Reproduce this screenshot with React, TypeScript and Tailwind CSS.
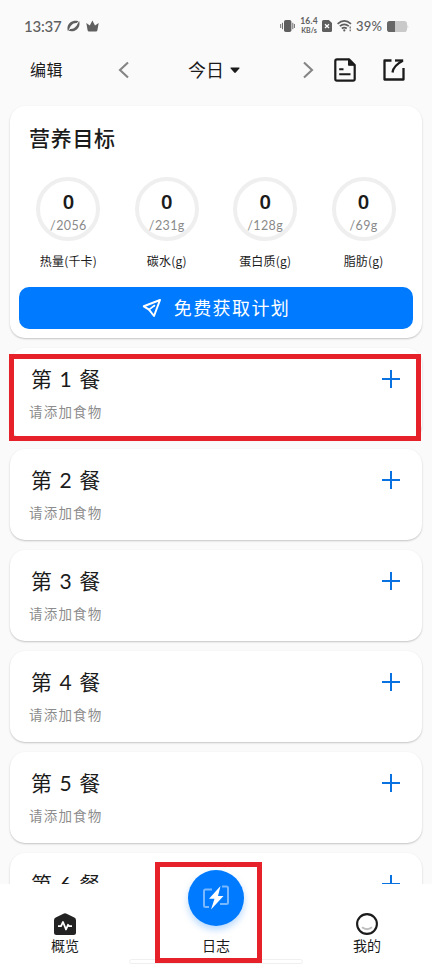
import React from 'react';

interface Goal {
    value: string;
    target: string;
    label: string;
}

const goals: Goal[] = [
    { value: "0", target: "/2056", label: "热量(千卡)" },
    { value: "0", target: "/231g", label: "碳水(g)" },
    { value: "0", target: "/128g", label: "蛋白质(g)" },
    { value: "0", target: "/69g", label: "脂肪(g)" },
];

const meals = [1, 2, 3, 4, 5, 6];

const StatusBar = () => (
    <div className="h-[50px] pt-[2px] pl-6 pr-[23px] flex items-center justify-between text-[#5f5f5f]">
        <div className="flex items-center">
            <span className="w-[43px] text-[15px] leading-5 tracking-[-0.2px] font-medium">13:37</span>
            <svg width="13" height="12" viewBox="0 0 13 12" fill="none">
                <path d="M1 11.2C0 8.5 0.4 4.8 3.2 2.6C5.6 0.6 9 0.4 11.4 1.2L9.8 3C7.6 2.8 6 3.6 4.4 5.2C2.8 6.8 2.4 8.8 1 11.2Z" fill="currentColor" />
                <path d="M12.1 0.9C13 3.5 12.6 7.2 9.8 9.4C7.4 11.4 4 11.6 1.6 10.8L3.2 9C5.4 9.2 7 8.4 8.6 6.8C10.2 5.2 10.6 3.2 12.1 0.9Z" fill="currentColor" />
            </svg>
            <svg width="13" height="12" viewBox="0 0 13 12" className="ml-[6px]" fill="currentColor">
                <path d="M0.3 3L3.8 5.4L6.4 0.5L9 5.4L12.7 3L11.4 10.2Q11.2 11.4 10 11.4H3Q1.8 11.4 1.6 10.2Z" />
            </svg>
        </div>
        <div className="flex items-center">
            <svg width="15" height="14" viewBox="0 0 15 14" fill="currentColor">
                <rect x="4" y="1" width="7.4" height="12" rx="1.8" />
                <path d="M0.7 5v4M2.5 3.8v6.4M12.8 3.8v6.4M14.4 5v4" stroke="currentColor" strokeWidth="0.9" />
            </svg>
            <div className="ml-[4px] -mt-px w-[20px] flex flex-col items-center leading-[9px] whitespace-nowrap font-bold">
                <span className="text-[8.5px] tracking-[0.2px]">16.4</span>
                <span className="text-[7px]">KB/s</span>
            </div>
            <svg width="10" height="12" viewBox="0 0 10 12" className="ml-[3px]">
                <path d="M1.5 0H6.8L10 3V10.5Q10 12 8.5 12H1.5Q0 12 0 10.5V1.5Q0 0 1.5 0Z" fill="currentColor" />
                <path d="M3 4.3L7 8M7 4.3L3 8" stroke="#fff" strokeWidth="1.3" />
            </svg>
            <svg width="15" height="12" viewBox="0 0 15 12" className="ml-[5px]" fill="none" stroke="currentColor" strokeWidth="1.7">
                <path d="M0.6 3.8Q7.3 -2 14 3.8" />
                <path d="M2.8 6.2Q7.3 2.4 11.8 6.2" />
                <path d="M4.8 8.5Q7.3 6.6 9.8 8.5" />
                <circle cx="7.3" cy="10.4" r="1.1" fill="currentColor" stroke="none" />
                <path d="M13.2 6.6v1.8M13.2 9.4v1.8" strokeWidth="1.2" />
            </svg>
            <span className="ml-[4px] w-[27px] text-[13px] leading-5 tracking-[0.2px] whitespace-nowrap font-medium">39%</span>
            <svg width="22" height="11" viewBox="0 0 22 11" className="ml-[4px]">
                <rect x="0" y="0" width="20" height="11" rx="2.8" fill="#c9c9c9" />
                <path d="M20.5 3.5Q22 5.5 20.5 7.5Z" fill="#c9c9c9" />
                <path d="M2.8 0H8V11H2.8Q0 11 0 8.2V2.8Q0 0 2.8 0Z" fill="#666" />
            </svg>
        </div>
    </div>
);

const Header = () => (
    <div className="h-[56px] pb-4 pl-[30px] pr-[27px] flex items-center text-[#1b1b1b]">
        <span className="w-[88px] text-[16px] leading-6 tracking-[0.6px]">编辑</span>
        <svg width="12" height="18" viewBox="0 0 12 18" fill="none" stroke="#858585" strokeWidth="2.1">
            <path d="M10 1.5L2 9L10 16.5" />
        </svg>
        <span className="ml-[58px] text-[18px] leading-6">今日</span>
        <svg width="10" height="7" viewBox="0 0 10 7" className="ml-[6px]" fill="#1b1b1b">
            <path d="M1 0.5H9Q10 0.5 9.3 1.5L5.8 5.6Q5 6.4 4.2 5.6L0.7 1.5Q0 0.5 1 0.5Z" />
        </svg>
        <svg width="12" height="18" viewBox="0 0 12 18" className="ml-[62px]" fill="none" stroke="#858585" strokeWidth="2.1">
            <path d="M2 1.5L10 9L2 16.5" />
        </svg>
        <svg width="22" height="24" viewBox="0 0 22 24" className="ml-[20px]" fill="none" stroke="#1b1b1b" strokeWidth="2.2">
            <path d="M3 1.3H15L20.7 7V21Q20.7 22.7 19 22.7H3Q1.3 22.7 1.3 21V3Q1.3 1.3 3 1.3Z" strokeLinejoin="round" />
            <path d="M14.5 1V7.3H21Z" fill="#1b1b1b" strokeWidth="1" />
            <path d="M5.2 11.3H9.5M5.2 16.3H16.5" strokeWidth="2" />
        </svg>
        <svg width="22" height="22" viewBox="0 0 22 22" className="ml-auto" fill="none" stroke="#1b1b1b" strokeWidth="2.3">
            <path d="M8.5 1.5H1.5V20.5H20.5V9" strokeLinejoin="round" />
            <path d="M12 1.5H20.2" />
            <path d="M9.5 13.5Q10.5 6.5 19.8 1.8" />
        </svg>
    </div>
);

const GoalRing = ({ value, target, label }: Goal) => (
    <div className="w-[98.4px] flex flex-col items-center">
        <div className="w-16 h-16 rounded-full border-4 border-[#efefef] flex flex-col items-center">
            <span className="mt-[9px] font-['Noto_Sans'] font-semibold text-[20px] leading-6 text-[#1b1b1b]">{value}</span>
            <span className="mt-[1px] text-[12.5px] leading-[22px] tracking-[0.4px] text-[#8a8a8a]">{target}</span>
        </div>
        <span className="mt-[11px] font-['Noto_Sans_CJK_SC',sans-serif] text-[12px] leading-[18px] tracking-[0.2px] text-[#1b1b1b]">{label}</span>
    </div>
);

const MealCard = ({ index }: { index: number }) => (
    <div className="h-[91px] shrink-0 rounded-[15px] bg-white shadow-[0_1px_2px_rgba(0,0,0,0.22)] pl-[19px] pr-[22px] pt-[16px] flex justify-between">
        <div>
            <h3 className="ml-[2px] text-[21px] leading-[30px] tracking-[0.6px] [word-spacing:1px] text-[#1b1b1b]">第 {index} 餐</h3>
            <p className="mt-[8px] text-[13.5px] leading-5 tracking-[1.2px] text-[#8c8c8c]">请添加食物</p>
        </div>
        <svg width="18" height="18" viewBox="0 0 18 18" className="mt-[6px]" stroke="#0a72e0" strokeWidth="2">
            <path d="M9 0V18M0 9H18" />
        </svg>
    </div>
);

const BottomNav = () => (
    <nav className="relative h-[80px] bg-white flex text-[14px] leading-5 text-[#1b1b1b]">
        <div className="w-[130px] pt-[29px] flex flex-col items-center">
            <svg width="22" height="22" viewBox="0 0 22 22">
                <path d="M9.4 0.7Q11 -0.2 12.6 0.7L20.3 4.5Q22 5.4 22 7.2V19.5Q22 22 19.5 22H2.5Q0 22 0 19.5V7.2Q0 5.4 1.7 4.5Z" fill="#222" />
                <path d="M4 13.2H7L9 9L12 16.5L14 11.8L15.2 13.2H18" fill="none" stroke="#fff" strokeWidth="1.8" strokeLinejoin="round" />
            </svg>
            <span className="mt-px">概览</span>
        </div>
        <div className="flex-1 flex flex-col items-center">
            <div className="-mt-[14px] w-14 h-14 rounded-full bg-[#007aff] shadow-[0_4px_7px_rgba(0,122,255,0.28)] flex items-center justify-center">
                <svg width="28" height="26" viewBox="0 0 28 26" fill="none">
                    <path d="M10 4.5H3.5Q2 4.5 2 6V20.5Q2 22 3.5 22H7M20 1.5H24.5Q26 1.5 26 3V17.5Q26 19 24.5 19H18" stroke="#79b7ff" strokeWidth="2" />
                    <path d="M18.5 1L7 13.8H12.5L9 24.5L21.5 11H16Z" fill="#fff" />
                </svg>
            </div>
            <span className="mt-[10px]">日志</span>
        </div>
        <div className="w-[130px] pt-[29px] flex flex-col items-center">
            <svg width="22" height="22" viewBox="0 0 22 22" fill="none">
                <circle cx="11" cy="11" r="9.9" stroke="#1b1b1b" strokeWidth="2.1" />
                <path d="M6 14.3Q11 18 16 14.3" stroke="#bdbdbd" strokeWidth="2" />
            </svg>
            <span className="mt-px">我的</span>
        </div>
        {/* gesture handle */}
        <div className="absolute left-[129px] bottom-0 w-[174px] h-[5px] rounded-full border border-[#efefef] bg-white" />
    </nav>
);

export default function App() {
    return (
        <div className="relative w-[432px] h-[964px] overflow-hidden bg-[#fafafa] font-['Lato','Noto_Sans_CJK_SC',sans-serif]">
            <div className="h-[884px] overflow-hidden">
                <StatusBar />
                <Header />
                <main className="px-[10px] flex flex-col gap-[10px]">
                    <section className="h-[232px] shrink-0 rounded-[15px] bg-white shadow-[0_1px_2px_rgba(0,0,0,0.22)] px-[9px] pt-[17px]">
                        <h2 className="pl-[10px] text-[21px] leading-[30px] tracking-[0.7px] font-medium text-[#1b1b1b]">营养目标</h2>
                        <div className="mt-[23.5px] flex justify-center">
                            {goals.map((goal) => (
                                <GoalRing key={goal.label} {...goal} />
                            ))}
                        </div>
                        <button className="mt-[17.5px] w-full h-[42px] rounded-[10px] bg-[#007aff] text-white flex items-center justify-center">
                            <svg width="20" height="20" viewBox="0 0 20 20" fill="none" stroke="currentColor" strokeWidth="2" strokeLinejoin="round" strokeLinecap="round">
                                <path d="M18 2L1.8 8.3L7 11.6L12 18Z" />
                                <path d="M7 11.6L12.5 7.5" strokeWidth="1.6" />
                            </svg>
                            <span className="ml-[12px] text-[18px] leading-6 tracking-[1.4px]">免费获取计划</span>
                        </button>
                    </section>
                    {meals.map((n) => (
                        <MealCard key={n} index={n} />
                    ))}
                </main>
            </div>
            <BottomNav />

            {/* highlight frames drawn over the screen */}
            <div className="absolute left-[9px] top-[354px] w-[412px] h-[87px] border-[5px] border-[#e62129]" />
            <div className="absolute left-[155px] top-[862px] w-[107px] h-[101px] border-[5px] border-[#e62129]" />
        </div>
    );
}
